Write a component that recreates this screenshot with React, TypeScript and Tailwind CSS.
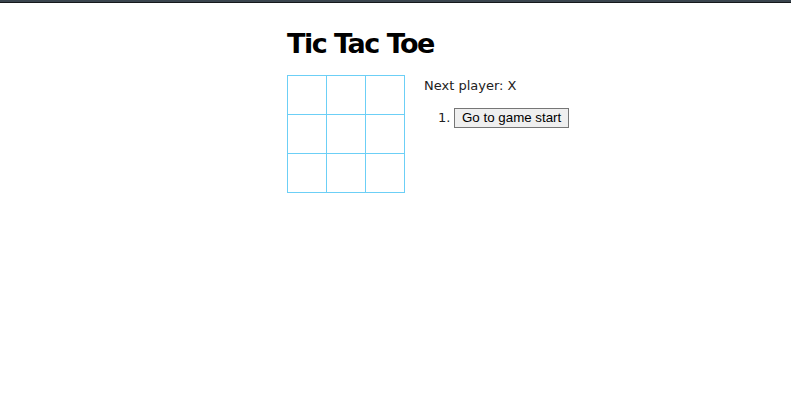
import React from "react";

export default function App() {
  const cells = Array.from({ length: 9 });
  return (
    <div className="min-h-[414px] w-full bg-white" style={{ fontFamily: '"DejaVu Sans", sans-serif' }}>
      <div className="h-[2px] bg-[#3a454e]" />
      <div className="h-px bg-[#15191c]" />
      <div className="pl-[287px] pt-[24px]">
        <h1 className="text-[27px] font-bold leading-[34px] text-black tracking-[-1.5px]">Tic Tac Toe</h1>
        <div className="mt-[14px] flex">
          <div className="grid grid-cols-3 w-[118px] border-l border-t border-[#6ccff6]">
            {cells.map((_, i) => (
              <div key={i} className="h-[39px] w-[39px] border-r border-b border-[#6ccff6]" />
            ))}
          </div>
          <div className="ml-[19px] text-[13px] text-[#222]">
            <div className="mt-[2px] leading-[18px]">Next player: X</div>
            <ol className="mt-[13px] flex items-center">
              <li className="flex items-center">
                <span className="w-[16px] ml-[14px] text-[#222]">1.</span>
                <button
                  className="h-[20px] border border-[#767676] bg-[#efefef] px-[7px] text-[13.33px] leading-[16px] text-black"
                  style={{ fontFamily: '"Liberation Sans", Arial, sans-serif' }}
                >
                  Go to game start
                </button>
              </li>
            </ol>
          </div>
        </div>
      </div>
    </div>
  );
}
